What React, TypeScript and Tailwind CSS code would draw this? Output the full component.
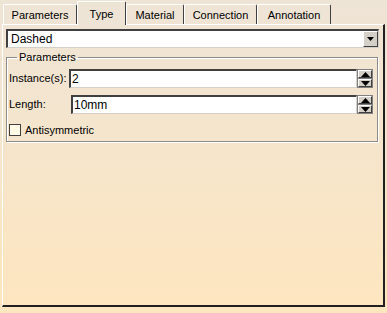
import React from 'react'

const tabs = ['Parameters', 'Type', 'Material', 'Connection', 'Annotation']

function Spinner() {
  return (
    <div className="flex flex-col w-[16px] h-[19px] bg-[#808080] p-[1px] gap-[1px]">
      <div className="flex-1 bg-[#d4d0c8] border-t border-l border-white border-r border-b border-r-[#404040] border-b-[#404040] flex items-center justify-center">
        <svg width="9" height="5" viewBox="0 0 9 5"><path d="M4.5 0 L9 5 L0 5 Z" fill="#000" /></svg>
      </div>
      <div className="flex-1 bg-[#d4d0c8] border-t border-l border-white border-r border-b border-r-[#404040] border-b-[#404040] flex items-center justify-center">
        <svg width="9" height="5" viewBox="0 0 9 5"><path d="M0 0 L9 0 L4.5 5 Z" fill="#000" /></svg>
      </div>
    </div>
  )
}

function SpinInput({ value, className }: { value: string; className: string }) {
  return (
    <div className={`flex h-[19px] ${className}`}>
      <div className="flex-1 bg-white border-t-2 border-l-2 border-t-[#404040] border-l-[#404040] border-b border-r border-b-[#d4d0c8] border-r-[#d4d0c8] flex items-center pl-[1px] text-[12px] text-black">
        {value}
      </div>
      <Spinner />
    </div>
  )
}

export default function App() {
  return (
    <div
      className="w-[387px] h-[313px] overflow-hidden bg-gradient-to-b from-[#eee4d6] to-[#fee6bf] text-[11px] text-black"
      style={{ fontFamily: '"Liberation Sans", Arial, sans-serif' }}
    >
      {/* tab strip */}
      <div className="flex items-end h-[24px] pl-[3px]">
        {tabs.map((t) => {
          const active = t === 'Type'
          return (
            <div
              key={t}
              className={`${
                active ? 'h-[24px] -mb-[1px] z-10 bg-[#eee4d6] pt-[5px]' : 'h-[20px] pt-[3px]'
              } relative border-t border-l border-white border-r border-r-[#404040] rounded-tl-[2px] rounded-tr-[2px] text-[11px] leading-[14px] flex justify-center ${
                t === 'Parameters' ? 'w-[74px]' : t === 'Type' ? 'w-[49px]' : t === 'Material' ? 'w-[58px]' : t === 'Connection' ? 'w-[73px]' : 'w-[74px]'
              }`}
            >
              {t}
            </div>
          )
        })}
      </div>

      {/* panel */}
      <div className="mx-[2px] h-[283px] border-t border-l border-white border-r-2 border-b-2 border-r-[#202020] border-b-[#202020] px-[3px] pt-[4px]">
        {/* dropdown */}
        <div className="flex h-[19px] w-[373px] bg-white border-t-2 border-l-2 border-t-[#404040] border-l-[#404040] border-b border-r border-b-[#d4d0c8] border-r-[#d4d0c8]">
          <div className="flex-1 flex items-center pl-[3px] text-[12px]">Dashed</div>
          <div className="w-[15px] h-full bg-[#d4d0c8] border-t border-l border-white border-r border-b border-r-[#404040] border-b-[#404040] flex items-center justify-center">
            <svg width="7" height="4" viewBox="0 0 7 4"><path d="M0 0 L7 0 L3.5 4 Z" fill="#000" /></svg>
          </div>
        </div>

        {/* group box */}
        <fieldset className="mt-[2px] w-[372px] h-[92px] border border-[#8c8c8c] shadow-[inset_1px_1px_0_#fff,1px_1px_0_#fff] px-[2px] pb-0">
          <legend className="ml-[8px] px-[2px] text-[11px] leading-[14px]">Parameters</legend>
          <div className="flex items-center mt-[5px]">
            <span className="text-[11px] w-[60px] whitespace-nowrap">Instance(s):</span>
            <SpinInput value="2" className="w-[304px]" />
          </div>
          <div className="flex items-center mt-[7px]">
            <span className="text-[11px] w-[62px]">Length:</span>
            <SpinInput value="10mm" className="w-[302px]" />
          </div>
          <div className="flex items-center mt-[8px] gap-[4px]">
            <div className="w-[12px] h-[12px] bg-[#fffbe6] border border-[#404040]" />
            <span className="text-[11px]">Antisymmetric</span>
          </div>
        </fieldset>
      </div>
    </div>
  )
}
